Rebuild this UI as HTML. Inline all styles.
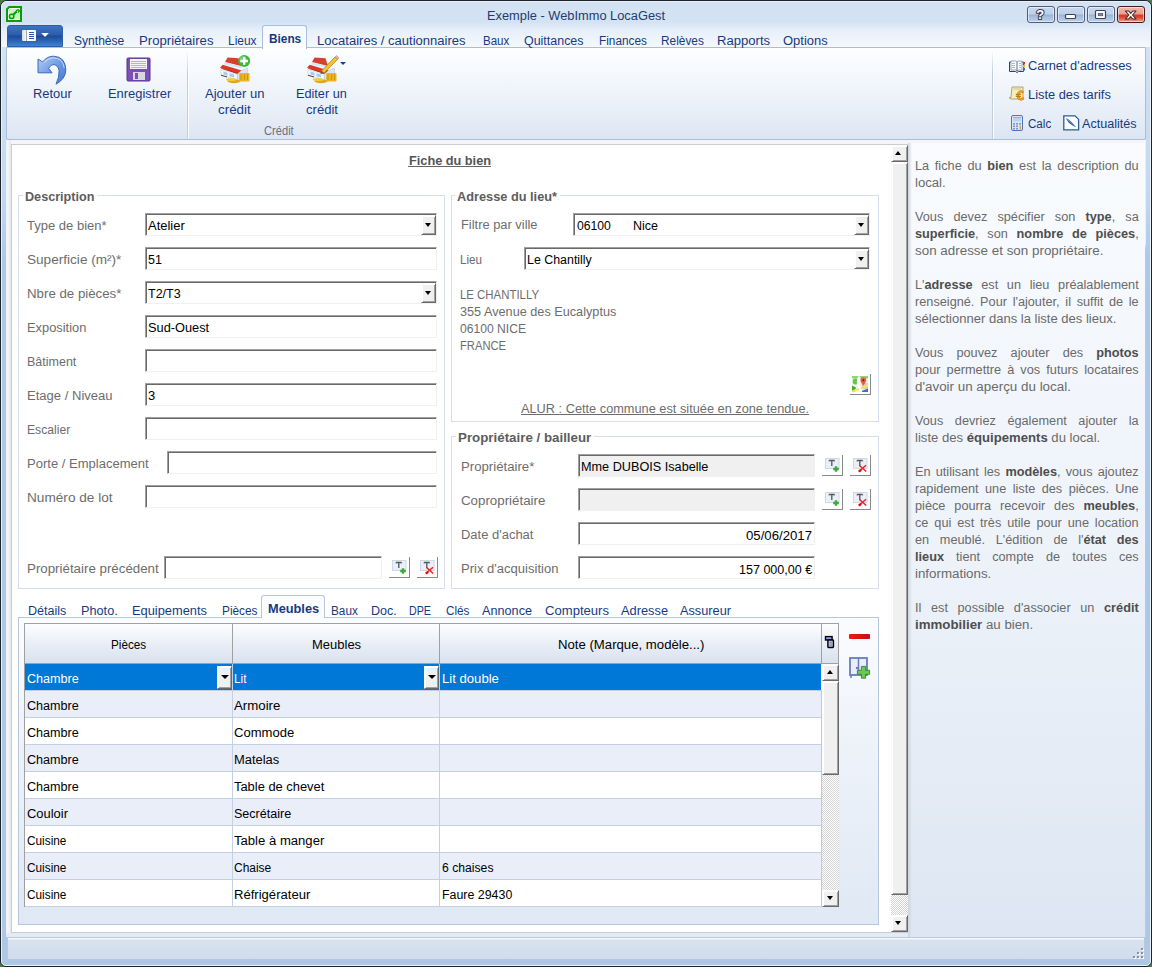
<!DOCTYPE html>
<html><head><meta charset="utf-8"><style>
html,body{margin:0;padding:0;width:1152px;height:967px;overflow:hidden;background:#4a7a4a;}
body{position:relative;font-family:"Liberation Sans",sans-serif;}
div,span{position:absolute;}
.t{white-space:pre;transform-origin:0 0;}
</style></head><body>
<div style="left:0px;top:0px;width:1152px;height:967px;box-sizing:border-box;border:1px solid #1c232b;border-radius:7px 7px 6px 6px;background:linear-gradient(#d3e3f3 0,#d0e1f3 60px,#c2d7ee 200px,#adc7e5 260px,#adc7e5);overflow:hidden;"></div>
<div style="left:1px;top:1px;width:1150px;height:965px;border-radius:6px 6px 5px 5px;box-sizing:border-box;border:1px solid #e9f1fb;"></div>
<div style="left:2px;top:2px;width:1148px;height:45px;border-radius:5px 5px 0 0;background:linear-gradient(#d2e2f3 0,#d3e3f3 20px,#e6eff9 28px,#f4f8fc 44px);"></div>
<svg style="position:absolute;left:6px;top:6px" width="16" height="16" viewBox="0 0 16 16">
<path d="M3.2 1 H15 V15 H1 V3.2 Z" fill="#fff" stroke="#00a000" stroke-width="2"/>
<rect x="3" y="3" width="10" height="10" fill="#c2f7c2"/>
<circle cx="5.6" cy="10.4" r="2.2" fill="none" stroke="#00a000" stroke-width="1.5"/>
<path d="M7.2 8.8 L11 5.3" stroke="#00a000" stroke-width="2.2"/><path d="M10 4.6 L12.3 3.7 L13.4 4.8 L12 6.4" fill="#fff" stroke="#00a000" stroke-width="1.4"/>
</svg>
<span class="t" style="left:487.00px;top:10px;font-size:12px;line-height:12px;color:#1f3c6b;transform:scaleX(1.0690);">Exemple - WebImmo LocaGest</span>
<div style="left:1027px;top:6px;width:28px;height:17px;box-sizing:border-box;border:1px solid #535b78;border-radius:3px;background:linear-gradient(#c6d7ee 0,#bfd1ea 7px,#98b2d4 8px,#a7c0df 10px,#bad0ea 15px);box-shadow:inset 0 0 0 1px rgba(255,255,255,.55);"></div>
<div style="left:1057px;top:6px;width:28px;height:17px;box-sizing:border-box;border:1px solid #535b78;border-radius:3px;background:linear-gradient(#c6d7ee 0,#bfd1ea 7px,#98b2d4 8px,#a7c0df 10px,#bad0ea 15px);box-shadow:inset 0 0 0 1px rgba(255,255,255,.55);"></div>
<div style="left:1087px;top:6px;width:28px;height:17px;box-sizing:border-box;border:1px solid #535b78;border-radius:3px;background:linear-gradient(#c6d7ee 0,#bfd1ea 7px,#98b2d4 8px,#a7c0df 10px,#bad0ea 15px);box-shadow:inset 0 0 0 1px rgba(255,255,255,.55);"></div>
<div style="left:1117px;top:6px;width:28px;height:17px;box-sizing:border-box;border:1px solid #4b1616;border-radius:3px;background:linear-gradient(#f2b7a8 0,#eba090 7px,#d53a20 8px,#d8452a 10px,#f0a08a 15px);box-shadow:inset 0 0 0 1px rgba(255,255,255,.55);"></div>
<svg style="position:absolute;left:1027px;top:6px" width="120" height="17" viewBox="0 0 120 17">
<text x="13.2" y="13.4" font-family="Liberation Sans" font-weight="bold" font-size="13" text-anchor="middle" fill="#fff" stroke="#3c4058" stroke-width="2.2" paint-order="stroke" stroke-linejoin="round">?</text>
<rect x="38.5" y="8.5" width="10" height="4" rx="1" fill="#fff" stroke="#3c4058" stroke-width="1.2"/>
<rect x="68.5" y="4.5" width="10" height="8" rx="1" fill="#fff" stroke="#3c4058" stroke-width="1.2"/>
<rect x="71.2" y="7.4" width="4.6" height="2.4" fill="#6f8fb8" stroke="#3c4058" stroke-width=".6"/>
<path transform="translate(98.4,5)" d="M0 0 H3.2 L5.3 2.3 L7.4 0 H10.6 L7.1 4 L10.6 8 H7.4 L5.3 5.7 L3.2 8 H0 L3.5 4 Z" fill="#fff" stroke="#3c2a2a" stroke-width="1.1" stroke-linejoin="round"/>
</svg>
<div style="left:7px;top:25px;width:56px;height:22px;border-radius:3px 3px 0 0;background:linear-gradient(#3f73c0,#2a5cab 45%,#1d4a96 50%,#2d63b8 75%,#3a86d1);box-sizing:border-box;border:1px solid #2b5da8;"></div>
<div style="left:22px;top:30px;width:14px;height:11px;background:linear-gradient(90deg,#ddd,#fff 40%,#f4f4f4);border-radius:1px;"></div>
<div style="left:26px;top:30px;width:1px;height:11px;background:#9ab;"></div>
<div style="left:29px;top:32px;width:5px;height:1px;background:#2a5cab;"></div>
<div style="left:29px;top:34px;width:5px;height:1px;background:#2a5cab;"></div>
<div style="left:29px;top:36px;width:5px;height:1px;background:#2a5cab;"></div>
<div style="left:29px;top:38px;width:5px;height:1px;background:#2a5cab;"></div>
<div style="left:40.5px;top:33px;width:0;height:0;border-left:4.0px solid transparent;border-right:4.0px solid transparent;border-top:4px solid #000;"></div>
<div style="left:40.5px;top:33px;width:0;height:0;border-left:4px solid transparent;border-right:4px solid transparent;border-top:4px solid #fff;"></div>
<div style="left:6px;top:47px;width:1140px;height:93px;box-sizing:border-box;border:1px solid #a9bfd9;border-radius:0 0 2px 2px;background:linear-gradient(#fdfeff,#f6f9fd 25%,#e6edf7 75%,#dbe5f3);"></div>
<div style="left:262px;top:25px;width:45px;height:24px;box-sizing:border-box;border:1px solid #a9bfd9;border-bottom:0;border-radius:3px 3px 0 0;background:linear-gradient(#f4f8fd,#fdfeff);"></div>
<span class="t" style="left:74.00px;top:35px;font-size:12px;line-height:12px;color:#163a82;transform:scaleX(1.0054);">Synthèse</span>
<span class="t" style="left:139.00px;top:35px;font-size:12px;line-height:12px;color:#163a82;transform:scaleX(1.0951);">Propriétaires</span>
<span class="t" style="left:228.20px;top:35px;font-size:12px;line-height:12px;color:#163a82;transform:scaleX(0.9969);">Lieux</span>
<span class="t" style="left:317.20px;top:35px;font-size:12px;line-height:12px;color:#163a82;transform:scaleX(1.0867);">Locataires / cautionnaires</span>
<span class="t" style="left:482.70px;top:35px;font-size:12px;line-height:12px;color:#163a82;transform:scaleX(0.9616);">Baux</span>
<span class="t" style="left:524.00px;top:35px;font-size:12px;line-height:12px;color:#163a82;transform:scaleX(1.0373);">Quittances</span>
<span class="t" style="left:599.30px;top:35px;font-size:12px;line-height:12px;color:#163a82;transform:scaleX(0.9838);">Finances</span>
<span class="t" style="left:661.40px;top:35px;font-size:12px;line-height:12px;color:#163a82;transform:scaleX(0.9896);">Relèves</span>
<span class="t" style="left:716.70px;top:35px;font-size:12px;line-height:12px;color:#163a82;transform:scaleX(1.0906);">Rapports</span>
<span class="t" style="left:782.60px;top:35px;font-size:12px;line-height:12px;color:#163a82;transform:scaleX(1.0808);">Options</span>
<span class="t" style="left:268.80px;top:33px;font-size:12px;line-height:12px;color:#163a82;font-weight:bold;transform:scaleX(0.9853);">Biens</span>
<div style="left:187px;top:50px;width:1px;height:89px;background:linear-gradient(rgba(176,196,222,0),#c3cedd 25%,#c3cedd);"></div>
<div style="left:188px;top:50px;width:1px;height:89px;background:rgba(255,255,255,.8);"></div>
<div style="left:992px;top:50px;width:1px;height:89px;background:linear-gradient(rgba(176,196,222,0),#c3cedd 25%,#c3cedd);"></div>
<div style="left:993px;top:50px;width:1px;height:89px;background:rgba(255,255,255,.8);"></div>
<span class="t" style="left:33.20px;top:88px;font-size:12px;line-height:12px;color:#163a82;transform:scaleX(1.0772);">Retour</span>
<span class="t" style="left:107.50px;top:88px;font-size:12px;line-height:12px;color:#163a82;transform:scaleX(1.0768);">Enregistrer</span>
<span class="t" style="left:205.00px;top:88px;font-size:12px;line-height:12px;color:#163a82;transform:scaleX(1.0859);">Ajouter un</span>
<span class="t" style="left:218.30px;top:104.4px;font-size:12px;line-height:12px;color:#163a82;transform:scaleX(1.1145);">crédit</span>
<span class="t" style="left:296.40px;top:88px;font-size:12px;line-height:12px;color:#163a82;transform:scaleX(1.0577);">Editer un</span>
<span class="t" style="left:305.80px;top:104.4px;font-size:12px;line-height:12px;color:#163a82;transform:scaleX(1.0907);">crédit</span>
<span class="t" style="left:263.60px;top:125px;font-size:12px;line-height:12px;color:#6f6b82;transform:scaleX(0.9278);">Crédit</span>
<span class="t" style="left:1027.80px;top:60px;font-size:12px;line-height:12px;color:#163a82;transform:scaleX(1.0690);">Carnet d'adresses</span>
<span class="t" style="left:1027.80px;top:88.5px;font-size:12px;line-height:12px;color:#163a82;transform:scaleX(1.0702);">Liste des tarifs</span>
<span class="t" style="left:1027.80px;top:117.6px;font-size:12px;line-height:12px;color:#163a82;transform:scaleX(0.9663);">Calc</span>
<span class="t" style="left:1081.50px;top:117.6px;font-size:12px;line-height:12px;color:#163a82;transform:scaleX(1.0475);">Actualités</span>
<svg style="position:absolute;left:36px;top:55px" width="32" height="32" viewBox="0 0 32 32">
<defs><linearGradient id="ug" x1="0" y1="0" x2="1" y2="1"><stop offset="0" stop-color="#b6d0f6"/><stop offset=".5" stop-color="#6f9be6"/><stop offset="1" stop-color="#4576d0"/></linearGradient></defs>
<path d="M2 4 L6.6 6.9 Q11 1.2 17.5 1.2 Q29.6 1.8 29.8 15 Q29.6 24 20 29.2 Q23.4 22 23.1 15.6 Q22 9.6 17 9.6 Q14.6 9.7 12.7 13.3 L16.1 17.8 L2 17.8 Z" fill="url(#ug)" stroke="#3d68b8" stroke-width="1" stroke-linejoin="round"/>
<path d="M8 7.5 Q12 3 17.5 2.8 Q27 3.2 28.2 13" fill="none" stroke="#d7e6fb" stroke-width="1" opacity=".8"/>
</svg>
<svg style="position:absolute;left:126px;top:57px" width="25" height="25" viewBox="0 0 25 25">
<rect x="1" y="1" width="23" height="23" rx="1" fill="#7b4fb5" stroke="#5b3592"/>
<rect x="4" y="2" width="17" height="10" fill="#f4f4f8"/>
<line x1="5" y1="4.5" x2="20" y2="4.5" stroke="#b9b2cf"/><line x1="5" y1="6.5" x2="20" y2="6.5" stroke="#b9b2cf"/><line x1="5" y1="8.5" x2="20" y2="8.5" stroke="#b9b2cf"/><line x1="5" y1="10.5" x2="20" y2="10.5" stroke="#b9b2cf"/>
<rect x="7" y="15" width="12" height="8" fill="#d8d8e0"/><rect x="9" y="16" width="3" height="6" fill="#7b4fb5"/>
</svg>
<svg style="position:absolute;left:214px;top:50px" width="40" height="36" viewBox="0 0 40 36">
<path d="M11 12 L13.6 7.4 L24.5 8.3 L27 16 Z" fill="#d8402c"/>
<path d="M10.5 12.5 L27 16.3 L28 18.3 L10 14.5 Z" fill="#cfe8f5"/>
<path d="M6 17.8 L8.7 14.8 L27.7 20.5 L23.3 24.2 Z" fill="#d93a26"/>
<path d="M8 18.5 L23 23 L24 24 L6.5 18.6 Z" fill="#a81a10"/>
<path d="M7 19.5 L23.3 24.2 L23.5 29.5 L7 25.2 Z" fill="#f4f7fb" stroke="#c8d2de" stroke-width=".6"/>
<path d="M9.5 21.5 L13.5 22.7 L13.5 25.7 L9.5 24.5 Z M15.5 23.2 L20 24.6 L20 27.5 L15.5 26.2 Z" fill="#a9c9ee"/>
<path d="M7 25.2 L13 27" stroke="#333" stroke-width=".9"/>
<path d="M23.3 24.2 L27.7 20.5 L33.5 18 L33.5 24 L23.5 29.5 Z" fill="#dbe6f2" stroke="#b0bccc" stroke-width=".5"/>
<ellipse cx="20" cy="31.2" rx="6.5" ry="2" fill="#e0a820"/>
<ellipse cx="17" cy="29.5" rx="5" ry="1.6" fill="#f4cc30"/>
<rect x="25.2" y="23" width="10.3" height="8.5" rx="1" fill="#e9b524"/>
<path d="M27 24.5 V30 M30.5 24.5 V30 M33.5 24.5 V30" stroke="#c88a10" stroke-width=".8"/>
<circle cx="30.2" cy="11" r="6" fill="#3cb83c"/><circle cx="29" cy="9.5" r="3.5" fill="#8fe08f" opacity=".6"/><path d="M30.2 7.2 V14.8 M26.4 11 H34" stroke="#fff" stroke-width="2.4"/></svg>
<svg style="position:absolute;left:301px;top:50px" width="40" height="36" viewBox="0 0 40 36">
<path d="M11 12 L13.6 7.4 L24.5 8.3 L27 16 Z" fill="#d8402c"/>
<path d="M10.5 12.5 L27 16.3 L28 18.3 L10 14.5 Z" fill="#cfe8f5"/>
<path d="M6 17.8 L8.7 14.8 L27.7 20.5 L23.3 24.2 Z" fill="#d93a26"/>
<path d="M8 18.5 L23 23 L24 24 L6.5 18.6 Z" fill="#a81a10"/>
<path d="M7 19.5 L23.3 24.2 L23.5 29.5 L7 25.2 Z" fill="#f4f7fb" stroke="#c8d2de" stroke-width=".6"/>
<path d="M9.5 21.5 L13.5 22.7 L13.5 25.7 L9.5 24.5 Z M15.5 23.2 L20 24.6 L20 27.5 L15.5 26.2 Z" fill="#a9c9ee"/>
<path d="M7 25.2 L13 27" stroke="#333" stroke-width=".9"/>
<path d="M23.3 24.2 L27.7 20.5 L33.5 18 L33.5 24 L23.5 29.5 Z" fill="#dbe6f2" stroke="#b0bccc" stroke-width=".5"/>
<ellipse cx="20" cy="31.2" rx="6.5" ry="2" fill="#e0a820"/>
<ellipse cx="17" cy="29.5" rx="5" ry="1.6" fill="#f4cc30"/>
<rect x="25.2" y="23" width="10.3" height="8.5" rx="1" fill="#e9b524"/>
<path d="M27 24.5 V30 M30.5 24.5 V30 M33.5 24.5 V30" stroke="#c88a10" stroke-width=".8"/>
<path d="M20.5 21 L34 7 L36.6 9.3 L23 23.2 Z" fill="#f2c430" stroke="#a07a10" stroke-width=".7"/><path d="M34 7 L35.5 5.5 L38 7.8 L36.6 9.3 Z" fill="#f0b0a0" stroke="#888" stroke-width=".5"/><path d="M20.5 21 L19.5 24 L23 23.2 Z" fill="#555"/></svg>
<div style="left:339.5px;top:62px;width:0;height:0;border-left:3px solid transparent;border-right:3px solid transparent;border-top:3px solid #15428b;"></div>
<svg style="position:absolute;left:1009px;top:60px" width="16" height="13" viewBox="0 0 16 13">
<path d="M0.5 2 H6.5 L8 3 L9.5 2 H14.5 V11.5 H9.5 L8 12.5 L6.5 11.5 H0.5 Z" fill="#eef2fa" stroke="#2e3f78" stroke-width="1"/>
<path d="M2 1 H7 L8 2 L9 1 H13 V10 H9 L8 11 L7 10 H2 Z" fill="#fff" stroke="#6a82b8" stroke-width=".7"/>
<line x1="8" y1="2" x2="8" y2="11" stroke="#2e3f78" stroke-width=".8"/>
<path d="M3 3.5 H6 M3 5.5 H6 M3 7.5 H6 M10 3.5 H12 M10 5.5 H12 M10 7.5 H12" stroke="#8fa8d8" stroke-width=".8"/>
<rect x="14" y="2" width="2" height="2.5" fill="#e03020"/><rect x="14" y="5" width="2" height="2.5" fill="#f0c020"/><rect x="14" y="8" width="2" height="2.5" fill="#3070d0"/></svg>
<svg style="position:absolute;left:1009px;top:86px" width="16" height="16" viewBox="0 0 16 16">
<path d="M3 1 H14 V13 H2 Q0.5 13 0.5 11.5 L2 11.5 L3 1 Z" fill="#f4efc0" stroke="#9a9060" stroke-width=".8"/>
<path d="M4.5 3 H12" stroke="#b9b080" stroke-width=".7"/>
<path d="M14.5 5.6 Q12.8 4.2 10.8 4.8 Q8 6 8 9.5 Q8 13.5 11.2 14.2 Q13.2 14.5 15 13 L14.4 11.6 Q12.9 12.8 11.4 12.3 Q9.9 11.6 9.9 9.5 Q9.9 7.2 11.5 6.6 Q12.8 6.2 13.9 7.1 Z" fill="#f5a818" stroke="#c07008" stroke-width=".6"/>
<path d="M6.8 8.4 H12.2 M6.8 10.4 H12" stroke="#d07a08" stroke-width="1.2"/></svg>
<svg style="position:absolute;left:1011px;top:115px" width="12" height="16" viewBox="0 0 12 16">
<rect x=".5" y=".5" width="11" height="15" rx="1.5" fill="#dce8f8" stroke="#4a78c0"/>
<rect x="2" y="2" width="8" height="1.2" fill="#f0a030"/>
<rect x="2" y="3.2" width="8" height="3.3" fill="#b8d4f2"/>
<g fill="#7b98c8"><rect x="2" y="8" width="2" height="1.6"/><rect x="5" y="8" width="2" height="1.6"/><rect x="8" y="8" width="2" height="1.6"/><rect x="2" y="10.5" width="2" height="1.6"/><rect x="5" y="10.5" width="2" height="1.6"/><rect x="2" y="13" width="2" height="1.5"/><rect x="5" y="13" width="2" height="1.5"/></g>
<rect x="8.5" y="10.5" width="1.5" height="4" fill="#f0a030"/></svg>
<svg style="position:absolute;left:1063px;top:115px" width="17" height="16" viewBox="0 0 17 16">
<path d="M0.8 0.8 H12 L15.6 4.4 V14.8 H0.8 Z" fill="#fff" stroke="#2a5a98" stroke-width="1.3"/>
<path d="M3 3 Q7 4.5 13 12 Q9.5 11 6 8 Q4 6 3 3 Z" fill="#2f5fa0"/>
<path d="M4 4.5 Q8 7 12 11.5" stroke="#9ab8e0" stroke-width=".6" fill="none"/></svg>
<div style="left:6px;top:140px;width:1140px;height:797px;background:linear-gradient(#f3f5f8,#e4ebf5);"></div>
<div style="left:6px;top:140px;width:5px;height:793px;background:linear-gradient(90deg,#edf2f9,#f4f6f9 40%,#e4e7eb);"></div>
<div style="left:11px;top:144px;width:897px;height:789px;box-sizing:border-box;border:1px solid #c9ccd1;border-right:0;background:#fff;"></div>
<div style="left:909px;top:143px;width:237px;height:794px;background:linear-gradient(#f9fbfe,#eef3fa 50%,#dde6f2);"></div>
<div style="left:1145px;top:143px;width:1px;height:794px;background:linear-gradient(#e8eff8 0,#e8eff8 100px,#b5cbe5 106px);"></div>
<div style="left:908px;top:143px;width:4px;height:794px;background:linear-gradient(90deg,#d0d4da,rgba(240,244,250,0));"></div>
<div style="left:7px;top:937px;width:1138px;height:23px;box-sizing:border-box;border:1px solid #b9c9dd;border-bottom-color:#b5c5da;background:linear-gradient(#f4f7fb 0,#f4f7fb 1px,#d8e2ef 2px,#d0dcec);"></div>
<span class="t" style="left:408.70px;top:155px;font-size:12px;line-height:12px;color:#555;font-weight:bold;transform:scaleX(1.0603);">Fiche du bien</span>
<div style="left:408px;top:166px;width:83px;height:1px;background:#666;"></div>
<div style="left:18px;top:195px;width:427px;height:394px;box-sizing:border-box;border:1px solid #d8dcef;"></div>
<div style="left:22.6px;top:193px;width:74.4px;height:4px;background:#fff;"></div>
<span class="t" style="left:24.60px;top:191px;font-size:12px;line-height:12px;color:#5d5d5d;font-weight:bold;transform:scaleX(1.0514);">Description</span>
<span class="t" style="left:27.40px;top:220px;font-size:12px;line-height:12px;color:#6d6d6d;transform:scaleX(1.0846);">Type de bien*</span>
<span class="t" style="left:27.40px;top:254px;font-size:12px;line-height:12px;color:#6d6d6d;transform:scaleX(1.1326);">Superficie (m²)*</span>
<span class="t" style="left:27.40px;top:288px;font-size:12px;line-height:12px;color:#6d6d6d;transform:scaleX(1.1056);">Nbre de pièces*</span>
<span class="t" style="left:27.40px;top:322px;font-size:12px;line-height:12px;color:#6d6d6d;transform:scaleX(1.0710);">Exposition</span>
<span class="t" style="left:27.40px;top:356px;font-size:12px;line-height:12px;color:#6d6d6d;transform:scaleX(1.0410);">Bâtiment</span>
<span class="t" style="left:27.40px;top:390px;font-size:12px;line-height:12px;color:#6d6d6d;transform:scaleX(1.0874);">Etage / Niveau</span>
<span class="t" style="left:27.40px;top:424px;font-size:12px;line-height:12px;color:#6d6d6d;transform:scaleX(1.0145);">Escalier</span>
<span class="t" style="left:27.40px;top:458px;font-size:12px;line-height:12px;color:#6d6d6d;transform:scaleX(1.0852);">Porte / Emplacement</span>
<span class="t" style="left:27.40px;top:492px;font-size:12px;line-height:12px;color:#6d6d6d;transform:scaleX(1.1357);">Numéro de lot</span>
<div style="left:145px;top:213px;width:292px;height:23px;background:#fff;box-sizing:border-box;border:1px solid;border-color:#a0a0a0 #f0f0f0 #f0f0f0 #a0a0a0;box-shadow:inset 1px 1px 0 #696969;"></div>
<div style="left:421px;top:215px;width:15px;height:20px;background:#f0f0f0;box-sizing:border-box;border:1px solid;border-color:#fcfcfc #696969 #696969 #fcfcfc;box-shadow:inset 1px 1px 0 #fff,inset -1px -1px 0 #a0a0a0;"></div>
<div style="left:425px;top:223px;width:0;height:0;border-left:3.5px solid transparent;border-right:3.5px solid transparent;border-top:4px solid #000;"></div>
<div style="left:145px;top:247px;width:292px;height:23px;background:#fff;box-sizing:border-box;border:1px solid;border-color:#a0a0a0 #f0f0f0 #f0f0f0 #a0a0a0;box-shadow:inset 1px 1px 0 #696969;"></div>
<div style="left:145px;top:281px;width:292px;height:23px;background:#fff;box-sizing:border-box;border:1px solid;border-color:#a0a0a0 #f0f0f0 #f0f0f0 #a0a0a0;box-shadow:inset 1px 1px 0 #696969;"></div>
<div style="left:421px;top:283px;width:15px;height:20px;background:#f0f0f0;box-sizing:border-box;border:1px solid;border-color:#fcfcfc #696969 #696969 #fcfcfc;box-shadow:inset 1px 1px 0 #fff,inset -1px -1px 0 #a0a0a0;"></div>
<div style="left:425px;top:291px;width:0;height:0;border-left:3.5px solid transparent;border-right:3.5px solid transparent;border-top:4px solid #000;"></div>
<div style="left:145px;top:315px;width:292px;height:23px;background:#fff;box-sizing:border-box;border:1px solid;border-color:#a0a0a0 #f0f0f0 #f0f0f0 #a0a0a0;box-shadow:inset 1px 1px 0 #696969;"></div>
<div style="left:145px;top:349px;width:292px;height:23px;background:#fff;box-sizing:border-box;border:1px solid;border-color:#a0a0a0 #f0f0f0 #f0f0f0 #a0a0a0;box-shadow:inset 1px 1px 0 #696969;"></div>
<div style="left:145px;top:383px;width:292px;height:23px;background:#fff;box-sizing:border-box;border:1px solid;border-color:#a0a0a0 #f0f0f0 #f0f0f0 #a0a0a0;box-shadow:inset 1px 1px 0 #696969;"></div>
<div style="left:145px;top:417px;width:292px;height:23px;background:#fff;box-sizing:border-box;border:1px solid;border-color:#a0a0a0 #f0f0f0 #f0f0f0 #a0a0a0;box-shadow:inset 1px 1px 0 #696969;"></div>
<div style="left:167px;top:451px;width:270px;height:23px;background:#fff;box-sizing:border-box;border:1px solid;border-color:#a0a0a0 #f0f0f0 #f0f0f0 #a0a0a0;box-shadow:inset 1px 1px 0 #696969;"></div>
<div style="left:145px;top:485px;width:292px;height:23px;background:#fff;box-sizing:border-box;border:1px solid;border-color:#a0a0a0 #f0f0f0 #f0f0f0 #a0a0a0;box-shadow:inset 1px 1px 0 #696969;"></div>
<span class="t" style="left:147.80px;top:220px;font-size:12px;line-height:12px;color:#000;transform:scaleX(1.0791);">Atelier</span>
<span class="t" style="left:147.80px;top:254px;font-size:12px;line-height:12px;color:#000;transform:scaleX(1.0412);">51</span>
<span class="t" style="left:147.80px;top:288px;font-size:12px;line-height:12px;color:#000;transform:scaleX(1.0434);">T2/T3</span>
<span class="t" style="left:147.80px;top:322px;font-size:12px;line-height:12px;color:#000;transform:scaleX(1.0652);">Sud-Ouest</span>
<span class="t" style="left:147.80px;top:390px;font-size:12px;line-height:12px;color:#000;transform:scaleX(1.0795);">3</span>
<span class="t" style="left:27.20px;top:563px;font-size:12px;line-height:12px;color:#6d6d6d;transform:scaleX(1.1091);">Propriétaire précédent</span>
<div style="left:164px;top:556px;width:218px;height:23px;background:#fff;box-sizing:border-box;border:1px solid;border-color:#a0a0a0 #f0f0f0 #f0f0f0 #a0a0a0;box-shadow:inset 1px 1px 0 #696969;"></div>
<div style="left:389px;top:557px;width:21px;height:21px;box-sizing:border-box;border-right:1px solid #8a8a8a;border-bottom:1px solid #8a8a8a;"></div>
<svg style="position:absolute;left:389px;top:557px" width="21" height="21" viewBox="0 0 21 21"><rect x="3.5" y="3.5" width="13.5" height="10" fill="#e9f0f9" stroke="#cdd8e8" stroke-width="1"/><path d="M7 5.5 H12.6 M9.8 5.5 V11" stroke="#555" stroke-width="1.3"/><path d="M7 5 V6.5 M12.6 5 V6.5" stroke="#777" stroke-width=".8"/><path d="M14 11.3 V16.8 M11.2 14 H16.8" stroke="#3aaa3a" stroke-width="2.4"/></svg>
<div style="left:417px;top:557px;width:21px;height:21px;box-sizing:border-box;border-right:1px solid #8a8a8a;border-bottom:1px solid #8a8a8a;"></div>
<svg style="position:absolute;left:417px;top:557px" width="21" height="21" viewBox="0 0 21 21"><rect x="3.5" y="3.5" width="13.5" height="10" fill="#e9f0f9" stroke="#cdd8e8" stroke-width="1"/><path d="M7 5.5 H12.6 M9.8 5.5 V11" stroke="#555" stroke-width="1.3"/><path d="M7 5 V6.5 M12.6 5 V6.5" stroke="#777" stroke-width=".8"/><path d="M9 16.5 L16 10.3 M9.5 10.5 L16.2 16.5" stroke="#f02020" stroke-width="1.5"/><path d="M8.8 16.6 L11 14.8" stroke="#e00" stroke-width="2.2"/></svg>
<div style="left:451px;top:195px;width:428px;height:227px;box-sizing:border-box;border:1px solid #d8dcef;"></div>
<div style="left:455.4px;top:193px;width:105.0px;height:4px;background:#fff;"></div>
<span class="t" style="left:457.40px;top:191px;font-size:12px;line-height:12px;color:#5d5d5d;font-weight:bold;transform:scaleX(1.0635);">Adresse du lieu*</span>
<span class="t" style="left:460.50px;top:219px;font-size:12px;line-height:12px;color:#6d6d6d;transform:scaleX(1.0722);">Filtre par ville</span>
<div style="left:573px;top:213px;width:297px;height:23px;background:#fff;box-sizing:border-box;border:1px solid;border-color:#a0a0a0 #f0f0f0 #f0f0f0 #a0a0a0;box-shadow:inset 1px 1px 0 #696969;"></div>
<div style="left:854px;top:215px;width:15px;height:20px;background:#f0f0f0;box-sizing:border-box;border:1px solid;border-color:#fcfcfc #696969 #696969 #fcfcfc;box-shadow:inset 1px 1px 0 #fff,inset -1px -1px 0 #a0a0a0;"></div>
<div style="left:858px;top:223px;width:0;height:0;border-left:3.5px solid transparent;border-right:3.5px solid transparent;border-top:4px solid #000;"></div>
<span class="t" style="left:576.70px;top:220px;font-size:12px;line-height:12px;color:#000;transform:scaleX(1.0159);">06100</span>
<span class="t" style="left:632.60px;top:220px;font-size:12px;line-height:12px;color:#000;transform:scaleX(1.0412);">Nice</span>
<span class="t" style="left:460.40px;top:254px;font-size:12px;line-height:12px;color:#6d6d6d;transform:scaleX(0.9696);">Lieu</span>
<div style="left:524px;top:247px;width:346px;height:23px;background:#fff;box-sizing:border-box;border:1px solid;border-color:#a0a0a0 #f0f0f0 #f0f0f0 #a0a0a0;box-shadow:inset 1px 1px 0 #696969;"></div>
<div style="left:854px;top:249px;width:15px;height:20px;background:#f0f0f0;box-sizing:border-box;border:1px solid;border-color:#fcfcfc #696969 #696969 #fcfcfc;box-shadow:inset 1px 1px 0 #fff,inset -1px -1px 0 #a0a0a0;"></div>
<div style="left:858px;top:257px;width:0;height:0;border-left:3.5px solid transparent;border-right:3.5px solid transparent;border-top:4px solid #000;"></div>
<span class="t" style="left:527.00px;top:254px;font-size:12px;line-height:12px;color:#000;transform:scaleX(1.0335);">Le Chantilly</span>
<span class="t" style="left:460.40px;top:289px;font-size:12px;line-height:12px;color:#6d6d6d;transform:scaleX(0.9502);">LE CHANTILLY</span>
<span class="t" style="left:460.40px;top:306px;font-size:12px;line-height:12px;color:#6d6d6d;transform:scaleX(1.0569);">355 Avenue des Eucalyptus</span>
<span class="t" style="left:460.40px;top:323px;font-size:12px;line-height:12px;color:#6d6d6d;transform:scaleX(1.0096);">06100 NICE</span>
<span class="t" style="left:460.40px;top:340px;font-size:12px;line-height:12px;color:#6d6d6d;transform:scaleX(0.9323);">FRANCE</span>
<div style="left:850px;top:374px;width:21px;height:21px;box-sizing:border-box;border-right:1px solid #8a8a8a;border-bottom:1px solid #8a8a8a;"></div>
<svg style="position:absolute;left:852px;top:376px" width="16" height="16" viewBox="0 0 16 16">
<rect x="0" y="0" width="16" height="16" rx="1.5" fill="#f4f2ea"/>
<rect x="10" y="7" width="6" height="6" fill="#d9b8a8" opacity=".7"/>
<path d="M0 1.2 H16" stroke="#8ad870" stroke-width="2.4"/>
<circle cx="3.6" cy="5.6" r="3" fill="#62c646"/>
<path d="M0 9.5 L4 11.5 L2.5 16 L0 16 Z" fill="#3fae2e"/>
<path d="M0 15.5 L16 9.5" stroke="#f6e45a" stroke-width="2"/>
<path d="M7 16 L16 12.5 V16 Z" fill="#3a6ed8"/>
<path d="M7.5 0.5 Q5 5 6.5 9 Q8 12.5 9 16" stroke="#fff" stroke-width="2.3" fill="none"/>
<path d="M11.3 1.3 a2.9 2.9 0 0 1 2.9 2.9 q0 1.8 -2.9 5.5 q-2.9 -3.7 -2.9 -5.5 a2.9 2.9 0 0 1 2.9 -2.9z" fill="#ec5a48"/>
<circle cx="11.3" cy="4.2" r="1" fill="#6a1a10"/></svg>
<span class="t" style="left:520.50px;top:403px;font-size:12px;line-height:12px;color:#6d6d6d;transform:scaleX(1.0638);text-decoration:underline;">ALUR : Cette commune est située en zone tendue.</span>
<div style="left:451px;top:436px;width:428px;height:153px;box-sizing:border-box;border:1px solid #d8dcef;"></div>
<div style="left:455.5px;top:434px;width:138.29999999999995px;height:4px;background:#fff;"></div>
<span class="t" style="left:457.50px;top:432px;font-size:12px;line-height:12px;color:#5d5d5d;font-weight:bold;transform:scaleX(1.1105);">Propriétaire / bailleur</span>
<span class="t" style="left:460.60px;top:461px;font-size:12px;line-height:12px;color:#6d6d6d;transform:scaleX(1.0990);">Propriétaire*</span>
<div style="left:578px;top:454px;width:237px;height:23px;background:#f0f0f0;box-sizing:border-box;border:1px solid;border-color:#a0a0a0 #f0f0f0 #f0f0f0 #a0a0a0;box-shadow:inset 1px 1px 0 #696969;"></div>
<span class="t" style="left:460.60px;top:495px;font-size:12px;line-height:12px;color:#6d6d6d;transform:scaleX(1.1099);">Copropriétaire</span>
<div style="left:578px;top:488px;width:237px;height:23px;background:#f0f0f0;box-sizing:border-box;border:1px solid;border-color:#a0a0a0 #f0f0f0 #f0f0f0 #a0a0a0;box-shadow:inset 1px 1px 0 #696969;"></div>
<span class="t" style="left:460.60px;top:529px;font-size:12px;line-height:12px;color:#6d6d6d;transform:scaleX(1.0806);">Date d'achat</span>
<div style="left:578px;top:522px;width:237px;height:23px;background:#fff;box-sizing:border-box;border:1px solid;border-color:#a0a0a0 #f0f0f0 #f0f0f0 #a0a0a0;box-shadow:inset 1px 1px 0 #696969;"></div>
<span class="t" style="left:460.60px;top:563px;font-size:12px;line-height:12px;color:#6d6d6d;transform:scaleX(1.0862);">Prix d'acquisition</span>
<div style="left:578px;top:556px;width:237px;height:23px;background:#fff;box-sizing:border-box;border:1px solid;border-color:#a0a0a0 #f0f0f0 #f0f0f0 #a0a0a0;box-shadow:inset 1px 1px 0 #696969;"></div>
<span class="t" style="left:580.80px;top:461px;font-size:12px;line-height:12px;color:#000;transform:scaleX(1.0555);">Mme DUBOIS Isabelle</span>
<span class="t" style="left:746.00px;top:530px;font-size:12px;line-height:12px;color:#000;transform:scaleX(1.0989);">05/06/2017</span>
<span class="t" style="left:738.80px;top:564px;font-size:12px;line-height:12px;color:#000;transform:scaleX(1.0447);">157 000,00 €</span>
<div style="left:822px;top:455px;width:21px;height:21px;box-sizing:border-box;border-right:1px solid #8a8a8a;border-bottom:1px solid #8a8a8a;"></div>
<svg style="position:absolute;left:822px;top:455px" width="21" height="21" viewBox="0 0 21 21"><rect x="3.5" y="3.5" width="13.5" height="10" fill="#e9f0f9" stroke="#cdd8e8" stroke-width="1"/><path d="M7 5.5 H12.6 M9.8 5.5 V11" stroke="#555" stroke-width="1.3"/><path d="M7 5 V6.5 M12.6 5 V6.5" stroke="#777" stroke-width=".8"/><path d="M14 11.3 V16.8 M11.2 14 H16.8" stroke="#3aaa3a" stroke-width="2.4"/></svg>
<div style="left:850px;top:455px;width:21px;height:21px;box-sizing:border-box;border-right:1px solid #8a8a8a;border-bottom:1px solid #8a8a8a;"></div>
<svg style="position:absolute;left:850px;top:455px" width="21" height="21" viewBox="0 0 21 21"><rect x="3.5" y="3.5" width="13.5" height="10" fill="#e9f0f9" stroke="#cdd8e8" stroke-width="1"/><path d="M7 5.5 H12.6 M9.8 5.5 V11" stroke="#555" stroke-width="1.3"/><path d="M7 5 V6.5 M12.6 5 V6.5" stroke="#777" stroke-width=".8"/><path d="M9 16.5 L16 10.3 M9.5 10.5 L16.2 16.5" stroke="#f02020" stroke-width="1.5"/><path d="M8.8 16.6 L11 14.8" stroke="#e00" stroke-width="2.2"/></svg>
<div style="left:822px;top:489px;width:21px;height:21px;box-sizing:border-box;border-right:1px solid #8a8a8a;border-bottom:1px solid #8a8a8a;"></div>
<svg style="position:absolute;left:822px;top:489px" width="21" height="21" viewBox="0 0 21 21"><rect x="3.5" y="3.5" width="13.5" height="10" fill="#e9f0f9" stroke="#cdd8e8" stroke-width="1"/><path d="M7 5.5 H12.6 M9.8 5.5 V11" stroke="#555" stroke-width="1.3"/><path d="M7 5 V6.5 M12.6 5 V6.5" stroke="#777" stroke-width=".8"/><path d="M14 11.3 V16.8 M11.2 14 H16.8" stroke="#3aaa3a" stroke-width="2.4"/></svg>
<div style="left:850px;top:489px;width:21px;height:21px;box-sizing:border-box;border-right:1px solid #8a8a8a;border-bottom:1px solid #8a8a8a;"></div>
<svg style="position:absolute;left:850px;top:489px" width="21" height="21" viewBox="0 0 21 21"><rect x="3.5" y="3.5" width="13.5" height="10" fill="#e9f0f9" stroke="#cdd8e8" stroke-width="1"/><path d="M7 5.5 H12.6 M9.8 5.5 V11" stroke="#555" stroke-width="1.3"/><path d="M7 5 V6.5 M12.6 5 V6.5" stroke="#777" stroke-width=".8"/><path d="M9 16.5 L16 10.3 M9.5 10.5 L16.2 16.5" stroke="#f02020" stroke-width="1.5"/><path d="M8.8 16.6 L11 14.8" stroke="#e00" stroke-width="2.2"/></svg>
<div style="left:891px;top:145px;width:17px;height:787px;background:#f0f0f0;"></div>
<div style="left:891px;top:145px;width:17px;height:17px;background:#f0f0f0;box-sizing:border-box;border:1px solid;border-color:#fcfcfc #696969 #696969 #fcfcfc;box-shadow:inset 1px 1px 0 #fff,inset -1px -1px 0 #a0a0a0;"></div>
<div style="left:895.0px;top:151px;width:0;height:0;border-left:3.5px solid transparent;border-right:3.5px solid transparent;border-bottom:4px solid #000;"></div>
<div style="left:891px;top:162px;width:17px;height:733px;background:#f0f0f0;box-sizing:border-box;border:1px solid;border-color:#fcfcfc #696969 #696969 #fcfcfc;box-shadow:inset 1px 1px 0 #fff,inset -1px -1px 0 #a0a0a0;"></div>
<div style="left:891px;top:895px;width:17px;height:20px;background-color:#fff;background-image:repeating-conic-gradient(#d4d4d4 0 25%,#fff 0 50%);background-size:2px 2px;"></div>
<div style="left:891px;top:915px;width:17px;height:17px;background:#f0f0f0;box-sizing:border-box;border:1px solid;border-color:#fcfcfc #696969 #696969 #fcfcfc;box-shadow:inset 1px 1px 0 #fff,inset -1px -1px 0 #a0a0a0;"></div>
<div style="left:895.0px;top:921px;width:0;height:0;border-left:3.5px solid transparent;border-right:3.5px solid transparent;border-top:4px solid #000;"></div>
<div style="left:18px;top:617px;width:861px;height:308px;box-sizing:border-box;border:1px solid #b6c7dd;background:linear-gradient(#fbfcfe,#eef3fa 40%,#dfe8f4);"></div>
<div style="left:261px;top:595px;width:64px;height:23px;box-sizing:border-box;border:1px solid #b6c7dd;border-bottom:0;border-radius:3px 3px 0 0;background:#fbfcfe;"></div>
<span class="t" style="left:28.30px;top:605px;font-size:12px;line-height:12px;color:#163a82;transform:scaleX(1.0469);">Détails</span>
<span class="t" style="left:81.25px;top:605px;font-size:12px;line-height:12px;color:#163a82;transform:scaleX(1.0594);">Photo.</span>
<span class="t" style="left:131.90px;top:605px;font-size:12px;line-height:12px;color:#163a82;transform:scaleX(1.0708);">Equipements</span>
<span class="t" style="left:221.50px;top:605px;font-size:12px;line-height:12px;color:#163a82;transform:scaleX(0.9856);">Pièces</span>
<span class="t" style="left:331.00px;top:605px;font-size:12px;line-height:12px;color:#163a82;transform:scaleX(0.9799);">Baux</span>
<span class="t" style="left:371.20px;top:605px;font-size:12px;line-height:12px;color:#163a82;transform:scaleX(1.0458);">Doc.</span>
<span class="t" style="left:409.30px;top:605px;font-size:12px;line-height:12px;color:#163a82;transform:scaleX(0.8918);">DPE</span>
<span class="t" style="left:445.60px;top:605px;font-size:12px;line-height:12px;color:#163a82;transform:scaleX(0.9746);">Clés</span>
<span class="t" style="left:482.00px;top:605px;font-size:12px;line-height:12px;color:#163a82;transform:scaleX(1.0555);">Annonce</span>
<span class="t" style="left:545.00px;top:605px;font-size:12px;line-height:12px;color:#163a82;transform:scaleX(1.0905);">Compteurs</span>
<span class="t" style="left:621.00px;top:605px;font-size:12px;line-height:12px;color:#163a82;transform:scaleX(1.0677);">Adresse</span>
<span class="t" style="left:680.00px;top:605px;font-size:12px;line-height:12px;color:#163a82;transform:scaleX(1.0621);">Assureur</span>
<span class="t" style="left:267.60px;top:602.5px;font-size:12px;line-height:12px;color:#163a82;font-weight:bold;transform:scaleX(1.0644);">Meubles</span>
<div style="left:24px;top:623px;width:815px;height:284px;box-sizing:border-box;border-top:1px solid #a0a0a0;border-left:1px solid #a0a0a0;"></div>
<div style="left:25px;top:624px;width:797px;height:39px;background:linear-gradient(#fdfdfe,#e6ecf5 60%,#d9e2ef);"></div>
<div style="left:822px;top:624px;width:16px;height:39px;background:linear-gradient(#fdfdfe,#e6ecf5 60%,#d9e2ef);"></div>
<div style="left:25px;top:663px;width:813px;height:1px;background:#a0a0a0;"></div>
<div style="left:232px;top:624px;width:1px;height:39px;background:#a0a0a0;"></div>
<div style="left:439px;top:624px;width:1px;height:39px;background:#a0a0a0;"></div>
<div style="left:821px;top:624px;width:1px;height:39px;background:#a0a0a0;"></div>
<div style="left:838px;top:623px;width:1px;height:41px;background:#a0a0a0;"></div>
<span class="t" style="left:110.60px;top:639px;font-size:12px;line-height:12px;color:#000;transform:scaleX(0.9772);">Pièces</span>
<span class="t" style="left:311.50px;top:639px;font-size:12px;line-height:12px;color:#000;transform:scaleX(1.0825);">Meubles</span>
<span class="t" style="left:557.60px;top:639px;font-size:12px;line-height:12px;color:#000;transform:scaleX(1.0975);">Note (Marque, modèle...)</span>
<div style="left:25px;top:664px;width:796px;height:26px;background:#0078d7;"></div>
<div style="left:25px;top:690px;width:797px;height:1px;background:#c3d0e4;"></div>
<div style="left:232px;top:664px;width:1px;height:27px;background:#c3d0e4;"></div>
<div style="left:439px;top:664px;width:1px;height:27px;background:#c3d0e4;"></div>
<span class="t" style="left:26.90px;top:673px;font-size:12px;line-height:12px;color:#fff;transform:scaleX(1.0496);">Chambre</span>
<span class="t" style="left:234.40px;top:673px;font-size:12px;line-height:12px;color:#fff;transform:scaleX(0.9787);">Lit</span>
<span class="t" style="left:441.50px;top:673px;font-size:12px;line-height:12px;color:#fff;transform:scaleX(1.0934);">Lit double</span>
<div style="left:25px;top:691px;width:797px;height:26px;background:#e9eef8;"></div>
<div style="left:25px;top:717px;width:797px;height:1px;background:#c3d0e4;"></div>
<div style="left:232px;top:691px;width:1px;height:27px;background:#c3d0e4;"></div>
<div style="left:439px;top:691px;width:1px;height:27px;background:#c3d0e4;"></div>
<span class="t" style="left:26.90px;top:700px;font-size:12px;line-height:12px;color:#000;transform:scaleX(1.0496);">Chambre</span>
<span class="t" style="left:234.40px;top:700px;font-size:12px;line-height:12px;color:#000;transform:scaleX(1.1045);">Armoire</span>
<div style="left:25px;top:718px;width:797px;height:26px;background:#fff;"></div>
<div style="left:25px;top:744px;width:797px;height:1px;background:#c3d0e4;"></div>
<div style="left:232px;top:718px;width:1px;height:27px;background:#c3d0e4;"></div>
<div style="left:439px;top:718px;width:1px;height:27px;background:#c3d0e4;"></div>
<span class="t" style="left:26.90px;top:727px;font-size:12px;line-height:12px;color:#000;transform:scaleX(1.0496);">Chambre</span>
<span class="t" style="left:234.40px;top:727px;font-size:12px;line-height:12px;color:#000;transform:scaleX(1.0894);">Commode</span>
<div style="left:25px;top:745px;width:797px;height:26px;background:#e9eef8;"></div>
<div style="left:25px;top:771px;width:797px;height:1px;background:#c3d0e4;"></div>
<div style="left:232px;top:745px;width:1px;height:27px;background:#c3d0e4;"></div>
<div style="left:439px;top:745px;width:1px;height:27px;background:#c3d0e4;"></div>
<span class="t" style="left:26.90px;top:754px;font-size:12px;line-height:12px;color:#000;transform:scaleX(1.0496);">Chambre</span>
<span class="t" style="left:234.40px;top:754px;font-size:12px;line-height:12px;color:#000;transform:scaleX(1.0757);">Matelas</span>
<div style="left:25px;top:772px;width:797px;height:26px;background:#fff;"></div>
<div style="left:25px;top:798px;width:797px;height:1px;background:#c3d0e4;"></div>
<div style="left:232px;top:772px;width:1px;height:27px;background:#c3d0e4;"></div>
<div style="left:439px;top:772px;width:1px;height:27px;background:#c3d0e4;"></div>
<span class="t" style="left:26.90px;top:781px;font-size:12px;line-height:12px;color:#000;transform:scaleX(1.0496);">Chambre</span>
<span class="t" style="left:234.40px;top:781px;font-size:12px;line-height:12px;color:#000;transform:scaleX(1.0742);">Table de chevet</span>
<div style="left:25px;top:799px;width:797px;height:26px;background:#e9eef8;"></div>
<div style="left:25px;top:825px;width:797px;height:1px;background:#c3d0e4;"></div>
<div style="left:232px;top:799px;width:1px;height:27px;background:#c3d0e4;"></div>
<div style="left:439px;top:799px;width:1px;height:27px;background:#c3d0e4;"></div>
<span class="t" style="left:26.90px;top:808px;font-size:12px;line-height:12px;color:#000;transform:scaleX(1.0784);">Couloir</span>
<span class="t" style="left:234.40px;top:808px;font-size:12px;line-height:12px;color:#000;transform:scaleX(1.0441);">Secrétaire</span>
<div style="left:25px;top:826px;width:797px;height:26px;background:#fff;"></div>
<div style="left:25px;top:852px;width:797px;height:1px;background:#c3d0e4;"></div>
<div style="left:232px;top:826px;width:1px;height:27px;background:#c3d0e4;"></div>
<div style="left:439px;top:826px;width:1px;height:27px;background:#c3d0e4;"></div>
<span class="t" style="left:26.90px;top:835px;font-size:12px;line-height:12px;color:#000;transform:scaleX(0.9845);">Cuisine</span>
<span class="t" style="left:234.40px;top:835px;font-size:12px;line-height:12px;color:#000;transform:scaleX(1.0916);">Table à manger</span>
<div style="left:25px;top:853px;width:797px;height:26px;background:#e9eef8;"></div>
<div style="left:25px;top:879px;width:797px;height:1px;background:#c3d0e4;"></div>
<div style="left:232px;top:853px;width:1px;height:27px;background:#c3d0e4;"></div>
<div style="left:439px;top:853px;width:1px;height:27px;background:#c3d0e4;"></div>
<span class="t" style="left:26.90px;top:862px;font-size:12px;line-height:12px;color:#000;transform:scaleX(0.9845);">Cuisine</span>
<span class="t" style="left:234.40px;top:862px;font-size:12px;line-height:12px;color:#000;transform:scaleX(0.9960);">Chaise</span>
<span class="t" style="left:441.50px;top:862px;font-size:12px;line-height:12px;color:#000;transform:scaleX(1.0158);">6 chaises</span>
<div style="left:25px;top:880px;width:797px;height:26px;background:#fff;"></div>
<div style="left:25px;top:906px;width:797px;height:1px;background:#c3d0e4;"></div>
<div style="left:232px;top:880px;width:1px;height:27px;background:#c3d0e4;"></div>
<div style="left:439px;top:880px;width:1px;height:27px;background:#c3d0e4;"></div>
<span class="t" style="left:26.90px;top:889px;font-size:12px;line-height:12px;color:#000;transform:scaleX(0.9845);">Cuisine</span>
<span class="t" style="left:234.40px;top:889px;font-size:12px;line-height:12px;color:#000;transform:scaleX(1.0895);">Réfrigérateur</span>
<span class="t" style="left:441.50px;top:889px;font-size:12px;line-height:12px;color:#000;transform:scaleX(1.0331);">Faure 29430</span>
<div style="left:821px;top:690px;width:1px;height:217px;background:#bccadf;"></div>
<div style="left:821px;top:664px;width:1px;height:26px;background:#f4f6fa;"></div>
<div style="left:217px;top:666px;width:15px;height:23px;background:#f0f0f0;box-sizing:border-box;border:1px solid;border-color:#fcfcfc #696969 #696969 #fcfcfc;box-shadow:inset 1px 1px 0 #fff,inset -1px -1px 0 #a0a0a0;"></div>
<div style="left:220.5px;top:675px;width:0;height:0;border-left:4px solid transparent;border-right:4px solid transparent;border-top:4px solid #000;"></div>
<div style="left:424px;top:666px;width:15px;height:23px;background:#f0f0f0;box-sizing:border-box;border:1px solid;border-color:#fcfcfc #696969 #696969 #fcfcfc;box-shadow:inset 1px 1px 0 #fff,inset -1px -1px 0 #a0a0a0;"></div>
<div style="left:427.5px;top:675px;width:0;height:0;border-left:4px solid transparent;border-right:4px solid transparent;border-top:4px solid #000;"></div>
<div style="left:822px;top:664px;width:17px;height:243px;background:#f0f0f0;"></div>
<div style="left:822px;top:664px;width:17px;height:17px;background:#f0f0f0;box-sizing:border-box;border:1px solid;border-color:#fcfcfc #696969 #696969 #fcfcfc;box-shadow:inset 1px 1px 0 #fff,inset -1px -1px 0 #a0a0a0;"></div>
<div style="left:826.5px;top:670px;width:0;height:0;border-left:3.5px solid transparent;border-right:3.5px solid transparent;border-bottom:4px solid #000;"></div>
<div style="left:822px;top:681px;width:17px;height:94px;background:#f0f0f0;box-sizing:border-box;border:1px solid;border-color:#fcfcfc #696969 #696969 #fcfcfc;box-shadow:inset 1px 1px 0 #fff,inset -1px -1px 0 #a0a0a0;"></div>
<div style="left:822px;top:775px;width:17px;height:115px;background-color:#fff;background-image:repeating-conic-gradient(#d4d4d4 0 25%,#fff 0 50%);background-size:2px 2px;"></div>
<div style="left:822px;top:890px;width:17px;height:17px;background:#f0f0f0;box-sizing:border-box;border:1px solid;border-color:#fcfcfc #696969 #696969 #fcfcfc;box-shadow:inset 1px 1px 0 #fff,inset -1px -1px 0 #a0a0a0;"></div>
<div style="left:826.5px;top:896px;width:0;height:0;border-left:3.5px solid transparent;border-right:3.5px solid transparent;border-top:4px solid #000;"></div>
<svg style="position:absolute;left:824px;top:635px" width="12" height="14" viewBox="0 0 12 14">
<rect x="1.5" y="1.6" width="6.6" height="3.4" fill="#8ea6f0" stroke="#000" stroke-width="1.4"/>
<rect x="3.9" y="4.9" width="5.5" height="7.5" rx=".6" fill="#cfe6fb" stroke="#000" stroke-width="1.5"/>
<path d="M5.3 7.1 H8 M5.3 9 H8 M5.3 10.9 H8" stroke="#6a5fb0" stroke-width="1"/></svg>
<div style="left:849px;top:634px;width:21px;height:5px;background:linear-gradient(90deg,#ee1a1a,#c01010);border-radius:1px;"></div>
<svg style="position:absolute;left:849px;top:657px" width="23" height="23" viewBox="0 0 23 23">
<rect x="1" y="1" width="17" height="17" fill="#e9eef8" stroke="#6a7cc0" stroke-width="1.8"/>
<line x1="9.5" y1="1" x2="9.5" y2="18" stroke="#6a7cc0" stroke-width="1.5"/>
<circle cx="8" cy="11" r="1.2" fill="#6a7cc0"/>
<line x1="2" y1="18" x2="2" y2="21" stroke="#6a7cc0" stroke-width="1.5"/>
<path d="M8.4 13.3 H12.4 V9.4 H16.6 V13.3 H20.6 V17.3 H16.6 V21.2 H12.4 V17.3 H8.4 Z" fill="#6cc850" stroke="#2f8a2a" stroke-width=".9"/></svg>
<div style="left:914.70px;top:160px;width:211.04px;font-size:12px;line-height:12px;color:#6a6a6a;white-space:nowrap;text-align:justify;text-align-last:justify;transform:scaleX(1.06);transform-origin:0 0;">La fiche du <b style="color:#4e4e4e">bien</b> est la description du</div>
<div style="left:914.70px;top:177px;font-size:12px;line-height:12px;color:#6a6a6a;white-space:pre;transform:scaleX(1.0959);transform-origin:0 0;">local.</div>
<div style="left:914.70px;top:211px;width:211.04px;font-size:12px;line-height:12px;color:#6a6a6a;white-space:nowrap;text-align:justify;text-align-last:justify;transform:scaleX(1.06);transform-origin:0 0;">Vous devez spécifier son <b style="color:#4e4e4e">type</b>, sa</div>
<div style="left:914.70px;top:228px;width:211.04px;font-size:12px;line-height:12px;color:#6a6a6a;white-space:nowrap;text-align:justify;text-align-last:justify;transform:scaleX(1.06);transform-origin:0 0;"><b style="color:#4e4e4e">superficie</b>, son <b style="color:#4e4e4e">nombre de pièces</b>,</div>
<div style="left:914.70px;top:245px;font-size:12px;line-height:12px;color:#6a6a6a;white-space:pre;transform:scaleX(1.1169);transform-origin:0 0;">son adresse et son propriétaire.</div>
<div style="left:914.70px;top:279px;width:211.04px;font-size:12px;line-height:12px;color:#6a6a6a;white-space:nowrap;text-align:justify;text-align-last:justify;transform:scaleX(1.06);transform-origin:0 0;">L'<b style="color:#4e4e4e">adresse</b> est un lieu préalablement</div>
<div style="left:914.70px;top:296px;width:211.04px;font-size:12px;line-height:12px;color:#6a6a6a;white-space:nowrap;text-align:justify;text-align-last:justify;transform:scaleX(1.06);transform-origin:0 0;">renseigné. Pour l'ajouter, il suffit de le</div>
<div style="left:914.70px;top:313px;font-size:12px;line-height:12px;color:#6a6a6a;white-space:pre;transform:scaleX(1.0861);transform-origin:0 0;">sélectionner dans la liste des lieux.</div>
<div style="left:914.70px;top:347px;width:211.04px;font-size:12px;line-height:12px;color:#6a6a6a;white-space:nowrap;text-align:justify;text-align-last:justify;transform:scaleX(1.06);transform-origin:0 0;">Vous pouvez ajouter des <b style="color:#4e4e4e">photos</b></div>
<div style="left:914.70px;top:364px;width:211.04px;font-size:12px;line-height:12px;color:#6a6a6a;white-space:nowrap;text-align:justify;text-align-last:justify;transform:scaleX(1.06);transform-origin:0 0;">pour permettre à vos futurs locataires</div>
<div style="left:914.70px;top:381px;font-size:12px;line-height:12px;color:#6a6a6a;white-space:pre;transform:scaleX(1.1159);transform-origin:0 0;">d'avoir un aperçu du local.</div>
<div style="left:914.70px;top:415px;width:211.04px;font-size:12px;line-height:12px;color:#6a6a6a;white-space:nowrap;text-align:justify;text-align-last:justify;transform:scaleX(1.06);transform-origin:0 0;">Vous devriez également ajouter la</div>
<div style="left:914.70px;top:432px;font-size:12px;line-height:12px;color:#6a6a6a;white-space:pre;transform:scaleX(1.0933);transform-origin:0 0;">liste des <b style="color:#4e4e4e">équipements</b> du local.</div>
<div style="left:914.70px;top:466px;width:211.04px;font-size:12px;line-height:12px;color:#6a6a6a;white-space:nowrap;text-align:justify;text-align-last:justify;transform:scaleX(1.06);transform-origin:0 0;">En utilisant les <b style="color:#4e4e4e">modèles</b>, vous ajoutez</div>
<div style="left:914.70px;top:483px;width:211.04px;font-size:12px;line-height:12px;color:#6a6a6a;white-space:nowrap;text-align:justify;text-align-last:justify;transform:scaleX(1.06);transform-origin:0 0;">rapidement une liste des pièces. Une</div>
<div style="left:914.70px;top:500px;width:211.04px;font-size:12px;line-height:12px;color:#6a6a6a;white-space:nowrap;text-align:justify;text-align-last:justify;transform:scaleX(1.06);transform-origin:0 0;">pièce pourra recevoir des <b style="color:#4e4e4e">meubles</b>,</div>
<div style="left:914.70px;top:517px;width:211.04px;font-size:12px;line-height:12px;color:#6a6a6a;white-space:nowrap;text-align:justify;text-align-last:justify;transform:scaleX(1.06);transform-origin:0 0;">ce qui est très utile pour une location</div>
<div style="left:914.70px;top:534px;width:211.04px;font-size:12px;line-height:12px;color:#6a6a6a;white-space:nowrap;text-align:justify;text-align-last:justify;transform:scaleX(1.06);transform-origin:0 0;">en meublé. L'édition de l'<b style="color:#4e4e4e">état des</b></div>
<div style="left:914.70px;top:551px;width:211.04px;font-size:12px;line-height:12px;color:#6a6a6a;white-space:nowrap;text-align:justify;text-align-last:justify;transform:scaleX(1.06);transform-origin:0 0;"><b style="color:#4e4e4e">lieux</b> tient compte de toutes ces</div>
<div style="left:914.70px;top:568px;font-size:12px;line-height:12px;color:#6a6a6a;white-space:pre;transform:scaleX(1.1107);transform-origin:0 0;">informations.</div>
<div style="left:914.70px;top:602px;width:211.04px;font-size:12px;line-height:12px;color:#6a6a6a;white-space:nowrap;text-align:justify;text-align-last:justify;transform:scaleX(1.06);transform-origin:0 0;">Il est possible d'associer un <b style="color:#4e4e4e">crédit</b></div>
<div style="left:914.70px;top:619px;font-size:12px;line-height:12px;color:#6a6a6a;white-space:pre;transform:scaleX(1.1076);transform-origin:0 0;"><b style="color:#4e4e4e">immobilier</b> au bien.</div>
<div style="left:1141px;top:948px;width:2px;height:2px;background:#8b919c;box-shadow:1px 1px 0 #fff;"></div>
<div style="left:1137px;top:952px;width:2px;height:2px;background:#8b919c;box-shadow:1px 1px 0 #fff;"></div>
<div style="left:1141px;top:952px;width:2px;height:2px;background:#8b919c;box-shadow:1px 1px 0 #fff;"></div>
<div style="left:1133px;top:956px;width:2px;height:2px;background:#8b919c;box-shadow:1px 1px 0 #fff;"></div>
<div style="left:1137px;top:956px;width:2px;height:2px;background:#8b919c;box-shadow:1px 1px 0 #fff;"></div>
<div style="left:1141px;top:956px;width:2px;height:2px;background:#8b919c;box-shadow:1px 1px 0 #fff;"></div>
</body></html>
